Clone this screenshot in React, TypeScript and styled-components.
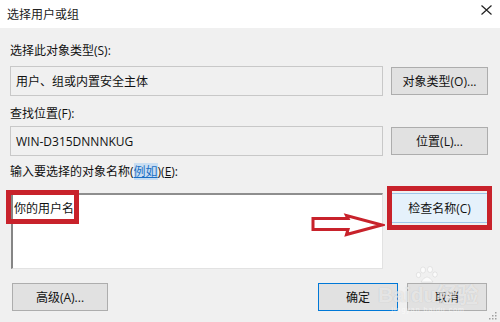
import React from "react";
import styled, { createGlobalStyle } from "styled-components";

const GlobalStyle = createGlobalStyle`
  html, body { margin: 0; padding: 0; background: #f0f0f0; }
  body { font-family: "Open Sans", "Noto Sans CJK SC", sans-serif; }
  * { box-sizing: border-box; }
`;

const RED = "#c8222b";

const Window = styled.div`
  position: relative;
  width: 500px;
  height: 322px;
  background: #f0f0f0;
  overflow: hidden;
  font-family: "Open Sans", "Noto Sans CJK SC", sans-serif;
  font-size: 12px;
  color: #111;
`;

const TitleBar = styled.div`
  height: 28px;
  background: #ffffff;
  display: flex;
  justify-content: space-between;
  align-items: flex-start;
  padding: 0 8px 0 7px;
`;

const Title = styled.div`
  margin-top: 7px;
  line-height: 16px;
  font-size: 12px;
  color: #222;
`;

const Close = styled.svg`
  margin-top: 5px;
  width: 11px;
  height: 10px;
`;

const Content = styled.div`
  display: flex;
  flex-direction: column;
  padding: 15px 12px 0 10px;
`;

const Label = styled.div<{ $mt?: number }>`
  margin-top: ${(p) => p.$mt ?? 0}px;
  line-height: 16px;
  height: 16px;
  white-space: nowrap;
`;

const Link = styled.span`
  color: #1a6fc4;
  background: #c9def2;
  text-decoration: underline;
`;

const U = styled.span`
  text-decoration: underline;
`;

const Row = styled.div<{ $mt: number; $align?: string }>`
  position: relative;
  margin-top: ${(p) => p.$mt}px;
  display: flex;
  align-items: ${(p) => p.$align ?? "center"};
  gap: 8px;
`;

const Field = styled.div`
  flex: 1;
  height: 30px;
  display: flex;
  align-items: center;
  padding-left: 5px;
  background: #f0f0f0;
  border: 1px solid #c8c8c8;
  white-space: nowrap;
`;

const NameBox = styled.div`
  position: relative;
  flex: 1;
  height: 76px;
  margin-left: 1px;
  background: #ffffff;
  border-top: 2px solid #8e8e8e;
  border-left: 2px solid #858585;
  border-right: 1px solid #e2e2e2;
  border-bottom: 1px solid #e2e2e2;
  padding: 6px 0 0 1px;
  line-height: 16px;
  font-size: 12px;
  color: #111;
`;

const Button = styled.div<{ $w?: number; $variant?: "default" | "focus" | "primary" }>`
  position: relative;
  flex: none;
  width: ${(p) => p.$w ?? 97}px;
  height: ${(p) => (p.$variant === "focus" ? 30 : 28)}px;
  display: flex;
  align-items: center;
  justify-content: center;
  white-space: nowrap;
  background: ${(p) => (p.$variant === "focus" ? "#e5f1fb" : "#e1e1e1")};
  border: 1px solid
    ${(p) =>
      p.$variant === "focus" ? "#9fc6ea" : p.$variant === "primary" ? "#0078d7" : "#adadad"};
  color: #111;
`;

const Footer = styled.div`
  margin-top: 14px;
  display: flex;
  align-items: center;
  gap: 9px;
  padding-left: 2px;
  padding-right: 1px;
`;

const Spacer = styled.div`
  flex: 1;
`;

const RedFrame = styled.div<{ $inset: string }>`
  position: absolute;
  inset: ${(p) => p.$inset};
  border: 5px solid ${RED};
  pointer-events: none;
`;

const Arrow = styled.svg`
  position: absolute;
  left: 301px;
  top: 20px;
  width: 74px;
  height: 24px;
`;

const Watermark = styled.div`
  position: absolute;
  left: 378px;
  top: 266px;
  display: flex;
  flex-direction: column;
  align-items: center;
  pointer-events: none;
`;

const WmText = styled.div`
  font-family: "Liberation Sans", "Noto Sans CJK SC", sans-serif;
  font-size: 21px;
  font-weight: bold;
  line-height: 22px;
  color: rgba(255, 255, 255, 0.6);
  text-shadow: 0 0 1px rgba(120, 120, 120, 0.35);
  white-space: nowrap;
`;

const WmSmall = styled.div`
  font-family: "Liberation Sans", sans-serif;
  font-size: 7px;
  color: rgba(255, 255, 255, 0.55);
  letter-spacing: 1px;
`;

const Grip = styled.svg`
  position: absolute;
  right: 3px;
  bottom: 2px;
  width: 9px;
  height: 9px;
`;

export default function App() {
  return (
    <>
      <GlobalStyle />
      <Window>
        <TitleBar>
          <Title>选择用户或组</Title>
          <Close viewBox="0 0 11 10">
            <path d="M0.5 0.5 L10.5 9.5 M10.5 0.5 L0.5 9.5" stroke="#222" strokeWidth="1.2" />
          </Close>
        </TitleBar>
        <Content>
          <Label>选择此对象类型(S):</Label>
          <Row $mt={7}>
            <Field>用户、组或内置安全主体</Field>
            <Button>对象类型(O)...</Button>
          </Row>
          <Label $mt={10}>查找位置(F):</Label>
          <Row $mt={4}>
            <Field>WIN-D315DNNNKUG</Field>
            <Button>位置(L)...</Button>
          </Row>
          <Label $mt={8}>
            输入要选择的对象名称(<Link>例如</Link>)(<U>E</U>):
          </Label>
          <Row $mt={13} $align="flex-start">
            <NameBox>
              你的用户名
              <RedFrame $inset="-5px auto auto -7px" style={{ width: 73, height: 34 }} />
            </NameBox>
            <Button $variant="focus">
              检查名称(C)
              <RedFrame $inset="-8px -5px -8px -5px" />
            </Button>
            <Arrow viewBox="0 0 74 24">
              <path
                d="M2 5.5 H37 L35.5 2.5 L71 12 L35.5 21.5 L37 16.5 H2 Z"
                fill="#ffffff"
                stroke={RED}
                strokeWidth="3"
                strokeLinejoin="miter"
              />
            </Arrow>
          </Row>
          <Footer>
            <Button $w={96}>高级(A)...</Button>
            <Spacer />
            <Button $w={80} $variant="primary">确定</Button>
            <Button $w={80}>取消</Button>
          </Footer>
        </Content>
        <Watermark>
          <svg width="26" height="18" viewBox="0 0 26 18">
            <g fill="rgba(255,255,255,0.75)" stroke="rgba(150,150,150,0.3)" strokeWidth="0.6">
              <ellipse cx="8" cy="4" rx="2.5" ry="3" />
              <ellipse cx="15" cy="3.5" rx="2.5" ry="3" />
              <ellipse cx="3.5" cy="9" rx="2.2" ry="2.6" />
              <ellipse cx="20" cy="8.5" rx="2.2" ry="2.6" />
              <path d="M6 16 Q12 6 18 16 Z" />
            </g>
          </svg>
          <WmText>Baidu经验</WmText>
          <WmSmall>jingyan.baidu.com</WmSmall>
        </Watermark>
        <Grip viewBox="0 0 9 9">
          <g fill="#a0a0a0">
            <rect x="7" y="1" width="1.5" height="1.5" />
            <rect x="4" y="4" width="1.5" height="1.5" />
            <rect x="7" y="4" width="1.5" height="1.5" />
            <rect x="1" y="7" width="1.5" height="1.5" />
            <rect x="4" y="7" width="1.5" height="1.5" />
            <rect x="7" y="7" width="1.5" height="1.5" />
          </g>
        </Grip>
      </Window>
    </>
  );
}
